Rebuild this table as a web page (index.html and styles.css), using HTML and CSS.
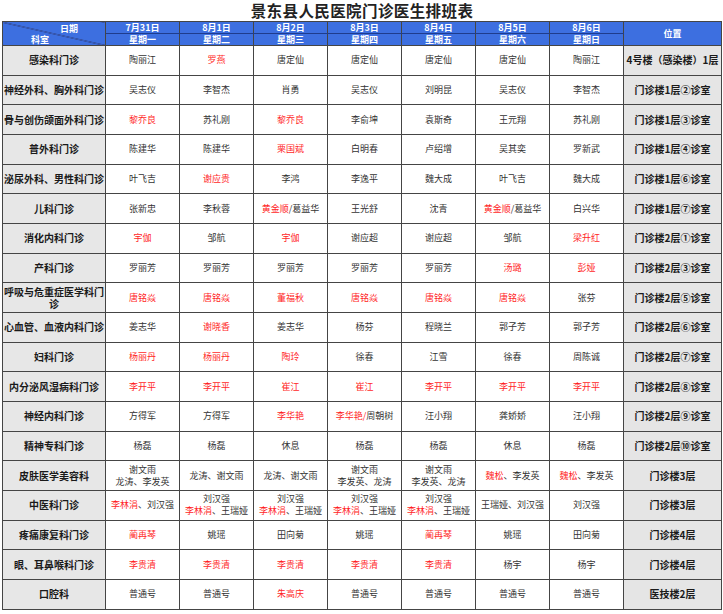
FILE: index.html
```html
<!DOCTYPE html>
<html lang="zh-CN">
<head>
<meta charset="utf-8">
<title>景东县人民医院门诊医生排班表</title>
<link rel="stylesheet" href="styles.css">
</head>
<body>
<div class="page">
  <h1 class="title">景东县人民医院门诊医生排班表</h1>
  <table class="sched">
    <colgroup>
      <col class="col-dept">
      <col class="col-day"><col class="col-day"><col class="col-day"><col class="col-day"><col class="col-day"><col class="col-day"><col class="col-day">
      <col class="col-loc">
    </colgroup>
    <thead>
      <tr class="h-date">
        <th rowspan="2" class="corner">
          <div class="corner-in"><span class="lbl-date">日期</span><span class="lbl-dept">科室</span></div>
        </th>
        <th>7月31日</th><th>8月1日</th><th>8月2日</th><th>8月3日</th><th>8月4日</th><th>8月5日</th><th>8月6日</th>
        <th rowspan="2" class="loc-h">位置</th>
      </tr>
      <tr class="h-week">
        <th>星期一</th><th>星期二</th><th>星期三</th><th>星期四</th><th>星期五</th><th>星期六</th><th>星期日</th>
      </tr>
    </thead>
    <tbody>
      <tr><td class="dept">感染科门诊</td><td>陶丽江</td><td class="r">罗燕</td><td>唐定仙</td><td>唐定仙</td><td>唐定仙</td><td>唐定仙</td><td>陶丽江</td><td class="loc">4号楼（感染楼）1层</td></tr>
      <tr><td class="dept">神经外科、胸外科门诊</td><td>吴志仪</td><td>李智杰</td><td>肖勇</td><td>吴志仪</td><td>刘明昆</td><td>吴志仪</td><td>李智杰</td><td class="loc">门诊楼1层②诊室</td></tr>
      <tr><td class="dept">骨与创伤颌面外科门诊</td><td class="r">黎乔良</td><td>苏礼刚</td><td class="r">黎乔良</td><td>李俞坤</td><td>袁斯奇</td><td>王元翔</td><td>苏礼刚</td><td class="loc">门诊楼1层③诊室</td></tr>
      <tr><td class="dept">普外科门诊</td><td>陈建华</td><td>陈建华</td><td class="r">栗国斌</td><td>白明春</td><td>卢绍增</td><td>吴其奕</td><td>罗新武</td><td class="loc">门诊楼1层④诊室</td></tr>
      <tr><td class="dept">泌尿外科、男性科门诊</td><td>叶飞吉</td><td class="r">谢应贵</td><td>李鸿</td><td>李逸平</td><td>魏大成</td><td>叶飞吉</td><td>魏大成</td><td class="loc">门诊楼1层⑥诊室</td></tr>
      <tr><td class="dept">儿科门诊</td><td>张新忠</td><td>李秋蓉</td><td><span class="r">黄金顺</span>/葛益华</td><td>王光舒</td><td>沈青</td><td><span class="r">黄金顺</span>/葛益华</td><td>白兴华</td><td class="loc">门诊楼1层⑦诊室</td></tr>
      <tr><td class="dept">消化内科门诊</td><td class="r">宇伽</td><td>邹航</td><td class="r">宇伽</td><td>谢应超</td><td>谢应超</td><td>邹航</td><td class="r">梁升红</td><td class="loc">门诊楼2层①诊室</td></tr>
      <tr><td class="dept">产科门诊</td><td>罗丽芳</td><td>罗丽芳</td><td>罗丽芳</td><td>罗丽芳</td><td>罗丽芳</td><td class="r">汤璐</td><td class="r">彭娅</td><td class="loc">门诊楼2层③诊室</td></tr>
      <tr><td class="dept">呼吸与危重症医学科门诊</td><td class="r">唐铭焱</td><td class="r">唐铭焱</td><td class="r">董福秋</td><td class="r">唐铭焱</td><td class="r">唐铭焱</td><td class="r">唐铭焱</td><td>张芬</td><td class="loc">门诊楼2层⑤诊室</td></tr>
      <tr><td class="dept">心血管、血液内科门诊</td><td>姜志华</td><td class="r">谢晓香</td><td>姜志华</td><td>杨芬</td><td>程晓兰</td><td>郭子芳</td><td>郭子芳</td><td class="loc">门诊楼2层⑥诊室</td></tr>
      <tr><td class="dept">妇科门诊</td><td class="r">杨丽丹</td><td class="r">杨丽丹</td><td class="r">陶玲</td><td>徐春</td><td>江雪</td><td>徐春</td><td>周陈诚</td><td class="loc">门诊楼2层⑦诊室</td></tr>
      <tr><td class="dept">内分泌风湿病科门诊</td><td class="r">李开平</td><td class="r">李开平</td><td class="r">崔江</td><td class="r">崔江</td><td class="r">李开平</td><td class="r">李开平</td><td class="r">李开平</td><td class="loc">门诊楼2层⑧诊室</td></tr>
      <tr><td class="dept">神经内科门诊</td><td>方得军</td><td>方得军</td><td class="r">李华艳</td><td><span class="r">李华艳/</span>周朝树</td><td>汪小翔</td><td>龚娇娇</td><td>汪小翔</td><td class="loc">门诊楼2层⑨诊室</td></tr>
      <tr><td class="dept">精神专科门诊</td><td>杨磊</td><td>杨磊</td><td>休息</td><td>杨磊</td><td>杨磊</td><td>休息</td><td>杨磊</td><td class="loc">门诊楼2层⑩诊室</td></tr>
      <tr><td class="dept">皮肤医学美容科</td><td>谢文雨<br>龙涛、李发英</td><td>龙涛、谢文雨</td><td>龙涛、谢文雨</td><td>谢文雨<br>李发英、龙涛</td><td>谢文雨<br>李发英、龙涛</td><td><span class="r">魏松</span>、李发英</td><td><span class="r">魏松</span>、李发英</td><td class="loc">门诊楼3层</td></tr>
      <tr><td class="dept">中医科门诊</td><td><span class="r">李林涓</span>、刘汉强</td><td>刘汉强<br><span class="r">李林涓</span>、王瑞娅</td><td>刘汉强<br><span class="r">李林涓</span>、王瑞娅</td><td>刘汉强<br><span class="r">李林涓</span>、王瑞娅</td><td>刘汉强<br><span class="r">李林涓</span>、王瑞娅</td><td>王瑞娅、刘汉强</td><td>刘汉强</td><td class="loc">门诊楼3层</td></tr>
      <tr><td class="dept">疼痛康复科门诊</td><td class="r">蔺再琴</td><td>姚瑶</td><td>田向菊</td><td>姚瑶</td><td class="r">蔺再琴</td><td>姚瑶</td><td>田向菊</td><td class="loc">门诊楼4层</td></tr>
      <tr><td class="dept">眼、耳鼻喉科门诊</td><td class="r">李贵清</td><td class="r">李贵清</td><td class="r">李贵清</td><td class="r">李贵清</td><td class="r">李贵清</td><td>杨宇</td><td>杨宇</td><td class="loc">门诊楼4层</td></tr>
      <tr><td class="dept">口腔科</td><td>普通号</td><td>普通号</td><td class="r">朱高庆</td><td>普通号</td><td>普通号</td><td>普通号</td><td>普通号</td><td class="loc">医技楼2层</td></tr>
    </tbody>
  </table>
</div>
</body>
</html>
```

FILE: styles.css
```css
html, body {
  margin: 0;
  padding: 0;
  background: #ffffff;
}

body {
  font-family: "Noto Sans CJK SC", "Noto Sans", sans-serif;
  color: #333333;
}

.page {
  width: 723px;
  padding: 0 1px 0 2px;
  box-sizing: border-box;
}

.title {
  margin: 0;
  height: 21px;
  font-size: 15.5px;
  line-height: 21px;
  letter-spacing: 0.4px;
  font-weight: 700;
  text-align: center;
  color: #222222;
  white-space: nowrap;
}

.sched {
  width: 720px;
  border-collapse: collapse;
  table-layout: fixed;
}

.col-dept { width: 103px; }
.col-day { width: 74px; }
.col-loc { width: 98px; }

.sched th,
.sched td {
  border: 1px solid #454545;
  padding: 0;
  text-align: center;
  vertical-align: middle;
}

.sched thead th {
  background: #3d6fe0;
  color: #ffffff;
  font-size: 9px;
  font-weight: 700;
  line-height: 11px;
  height: 11px;
}

.h-date th {
  border-bottom: 1px solid #1f3c8c;
}

.sched thead th.corner {
  background-color: #3d6fe0;
  background-image: linear-gradient(to top right, transparent calc(50% - 0.6px), #2a2a55 50%, transparent calc(50% + 0.6px));
  border-bottom: 1px solid #454545;
}

.corner-in {
  display: flex;
  flex-direction: column;
  align-items: flex-start;
  height: 23px;
  justify-content: center;
}

.lbl-date {
  margin-left: 57px;
  line-height: 11px;
}

.lbl-dept {
  margin-left: 28px;
  line-height: 11px;
}

.sched thead th.loc-h {
  font-size: 9px;
  border-bottom: 1px solid #454545;
}

.sched tbody tr {
  height: 29.68px;
}

.sched tbody td {
  font-size: 9px;
  line-height: 12px;
  color: #333333;
  background: #ffffff;
}

.sched tbody td.dept {
  background: #e7e7e7;
  color: #1a1a1a;
  font-size: 10px;
  font-weight: 700;
  line-height: 12px;
  padding: 0 1px;
}

.sched tbody td.loc {
  background: #e5e5e5;
  color: #1a1a1a;
  font-size: 10px;
  font-weight: 700;
}

.r {
  color: #ff1f1f;
}

.sched tbody td.r {
  color: #ff1f1f;
}
```
